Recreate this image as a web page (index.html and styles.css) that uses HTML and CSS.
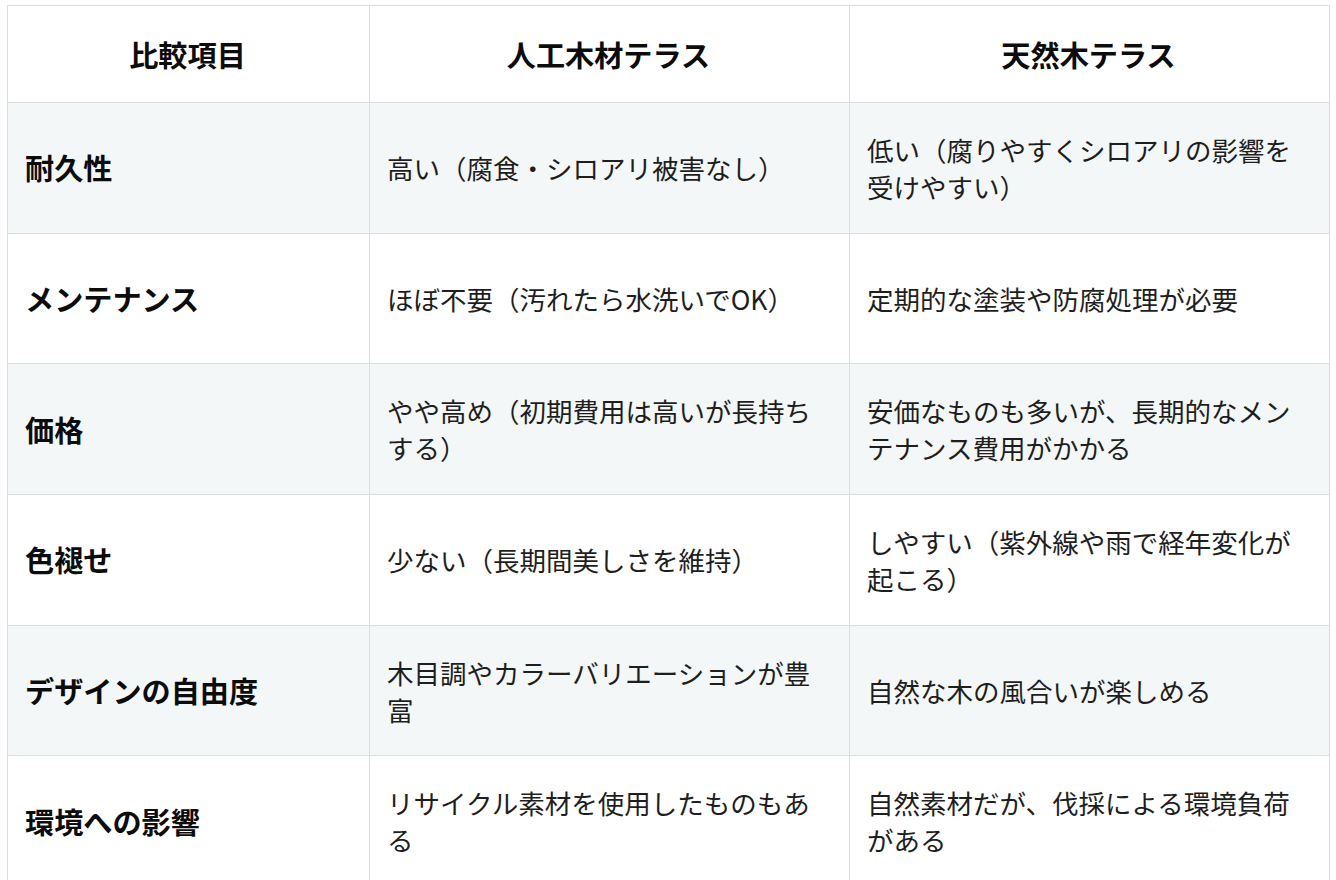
FILE: index.html
```html
<!DOCTYPE html>
<html lang="ja">
<head>
<meta charset="utf-8">
<title>比較表</title>
<link rel="stylesheet" href="styles.css">
</head>
<body>
<div class="wrap">
<table class="cmp">
  <colgroup>
    <col class="c1"><col class="c2"><col class="c3">
  </colgroup>
  <thead>
    <tr><th>比較項目</th><th>人工木材テラス</th><th>天然木テラス</th></tr>
  </thead>
  <tbody>
    <tr class="alt"><th>耐久性</th><td>高い（腐食・シロアリ被害なし）</td><td>低い（腐りやすくシロアリの影響を受けやすい）</td></tr>
    <tr><th>メンテナンス</th><td>ほぼ不要（汚れたら水洗いでOK）</td><td>定期的な塗装や防腐処理が必要</td></tr>
    <tr class="alt"><th>価格</th><td>やや高め（初期費用は高いが長持ちする）</td><td>安価なものも多いが、長期的なメンテナンス費用がかかる</td></tr>
    <tr><th>色褪せ</th><td>少ない（長期間美しさを維持）</td><td>しやすい（紫外線や雨で経年変化が起こる）</td></tr>
    <tr class="alt"><th>デザインの自由度</th><td>木目調やカラーバリエーションが豊富</td><td>自然な木の風合いが楽しめる</td></tr>
    <tr><th>環境への影響</th><td>リサイクル素材を使用したものもある</td><td>自然素材だが、伐採による環境負荷がある</td></tr>
  </tbody>
</table>
</div>
</body>
</html>
```

FILE: styles.css
```css
html, body {
  margin: 0;
  padding: 0;
  background: #ffffff;
}
body {
  font-family: "Hiragino Sans", "Noto Sans CJK JP", "Noto Sans", sans-serif;
  font-size: 26.5px;
  line-height: 37px;
  color: #1e1e1e;
}
.wrap {
  padding: 5px 8px 0 7px;
}
.cmp {
  width: 1322px;
  border-collapse: collapse;
  table-layout: fixed;
  border: 1px solid #cccccc;
}
.c1 { width: 362px; }
.c2 { width: 480px; }
.c3 { width: 480px; }
.cmp th, .cmp td {
  border: 1px solid #dddddd;
  padding: 0 19px 0 17px;
  vertical-align: middle;
  text-align: left;
}
.cmp thead tr { height: 97px; }
.cmp tbody tr { height: 130.7px; }
.cmp thead th {
  text-align: center;
  font-size: 1.1em;
  font-weight: 700;
  color: #0c0c0c;
}
.cmp tbody th {
  font-size: 1.1em;
  font-weight: 700;
  color: #0c0c0c;
}
.cmp td {
  font-weight: 400;
}
.cmp tr.alt {
  background: #f4f7f7;
}
```
